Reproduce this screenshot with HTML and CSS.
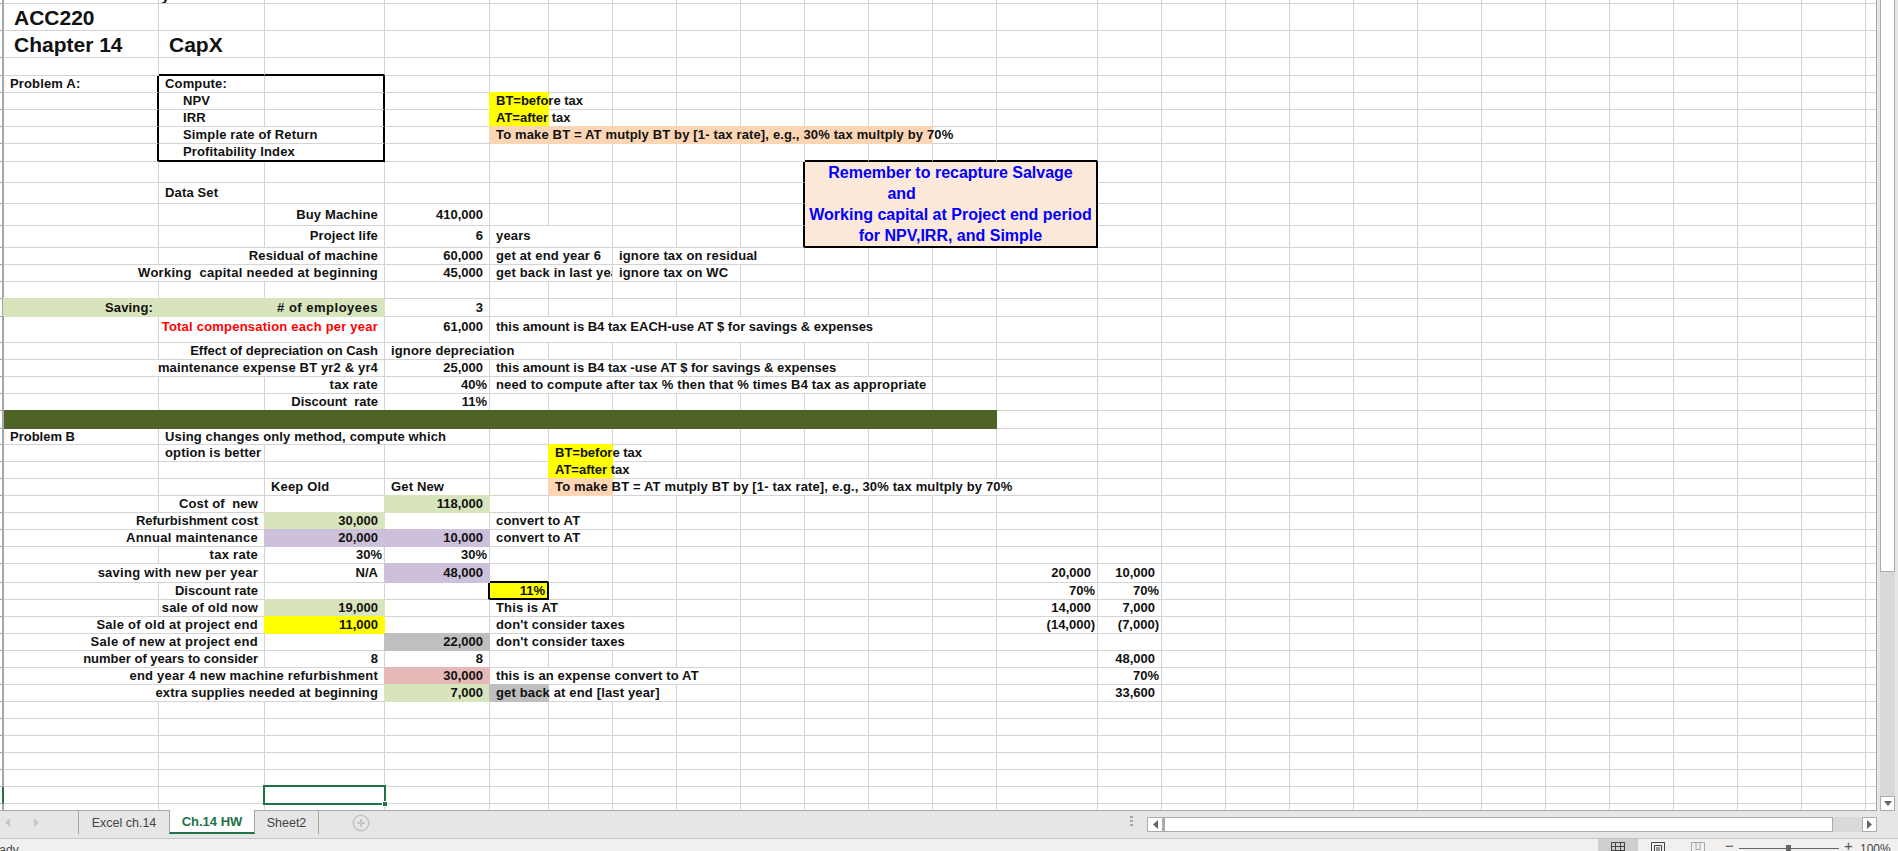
FILE: index.html
```html
<!DOCTYPE html>
<html lang="en">
<head>
<meta charset="utf-8">
<title>ACC220 Chapter 14 CapX</title>
<link rel="stylesheet" href="styles.css">
</head>
<body>
<div class="app">
<div class="work">
<div class="sheet">
<table class="grid">
<colgroup>
<col class="c-h"><col class="c-a"><col class="c-b"><col class="c-c"><col class="c-d"><col class="c-e"><col class="c-f">
<col class="c-n"><col class="c-n"><col class="c-n"><col class="c-n"><col class="c-n"><col class="c-n">
<col class="c-m"><col class="c-n"><col class="c-n"><col class="c-r">
</colgroup>
<tbody>
<tr class="h4"><td class="hd"></td><td class="kn"></td><td class="kn"><div class="cut"><div class="cut-t">y</div></div></td><td></td><td></td><td></td><td></td><td class="g" colspan="6"></td><td></td><td></td><td></td><td class="r"></td></tr>
<tr class="h27"><td class="hd"></td><td class="title">ACC220</td><td></td><td></td><td></td><td></td><td></td><td class="g" colspan="6"></td><td></td><td></td><td></td><td class="r"></td></tr>
<tr class="h27"><td class="hd"></td><td class="title">Chapter 14</td><td class="title t2">CapX</td><td></td><td></td><td></td><td></td><td class="g" colspan="6"></td><td></td><td></td><td></td><td class="r"></td></tr>
<tr class="h18"><td class="hd"></td><td></td><td class="kb"></td><td class="kb"></td><td></td><td></td><td></td><td class="g" colspan="6"></td><td></td><td></td><td></td><td class="r"></td></tr>
<tr><td class="hd"></td><td class="l kr">Problem A:</td><td class="l">Compute:</td><td class="kr"></td><td></td><td></td><td></td><td class="g" colspan="6"></td><td></td><td></td><td></td><td class="r"></td></tr>
<tr><td class="hd"></td><td class="kr"></td><td class="l in">NPV</td><td class="kr"></td><td></td><td class="l yl nr ls0">BT=before tax</td><td></td><td class="g" colspan="6"></td><td></td><td></td><td></td><td class="r"></td></tr>
<tr><td class="hd"></td><td class="kr"></td><td class="l in">IRR</td><td class="kr"></td><td></td><td class="l yl nr ls0">AT=after tax</td><td></td><td class="g" colspan="6"></td><td></td><td></td><td></td><td class="r"></td></tr>
<tr><td class="hd"></td><td class="kr"></td><td class="l in kr" colspan="2">Simple rate of Return</td><td></td><td class="l pe nr" colspan="7">To make BT = AT mutply BT by [1- tax rate], e.g., 30% tax multply by 70%</td><td></td><td></td><td></td><td></td><td class="r"></td></tr>
<tr class="h18"><td class="hd"></td><td class="kr"></td><td class="l in kb kr" colspan="2">Profitability Index</td><td></td><td></td><td></td><td></td><td></td><td></td><td class="kb"></td><td class="kb"></td><td class="kb"></td><td class="kb"></td><td></td><td></td><td class="r"></td></tr>
<tr class="h21"><td class="hd"></td><td></td><td></td><td></td><td></td><td></td><td></td><td></td><td></td><td class="kr"></td>
<td class="note" colspan="4" rowspan="4"><div class="note-l">Remember to recapture Salvage</div><div class="note-l">and&nbsp;&nbsp;&nbsp;&nbsp;&nbsp;&nbsp;&nbsp;&nbsp;&nbsp;&nbsp;&nbsp;&nbsp;&nbsp;&nbsp;&nbsp;&nbsp;&nbsp;&nbsp;&nbsp;&nbsp;&nbsp;&nbsp;</div><div class="note-l">Working capital at Project end period</div><div class="note-l">for NPV,IRR, and Simple</div></td>
<td></td><td></td><td class="r"></td></tr>
<tr class="h21"><td class="hd"></td><td></td><td class="l">Data Set</td><td></td><td></td><td></td><td></td><td></td><td></td><td class="kr"></td><td></td><td></td><td class="r"></td></tr>
<tr class="h21"><td class="hd"></td><td></td><td></td><td class="v">Buy Machine</td><td class="v n">410,000</td><td></td><td></td><td></td><td></td><td class="kr"></td><td></td><td></td><td class="r"></td></tr>
<tr class="h22"><td class="hd"></td><td></td><td></td><td class="v">Project life</td><td class="v n">6</td><td class="l nr">years</td><td></td><td></td><td></td><td class="kr"></td><td></td><td></td><td class="r"></td></tr>
<tr><td class="hd"></td><td></td><td class="v" colspan="2">Residual of machine</td><td class="v n">60,000</td><td class="l" colspan="2">get at end year 6</td><td class="l" colspan="3">ignore tax on residual</td><td class="g" colspan="3"></td><td></td><td></td><td></td><td class="r"></td></tr>
<tr><td class="hd"></td><td class="v ls3" colspan="3">Working&nbsp;&nbsp;capital needed at beginning</td><td class="v n">45,000</td><td class="l clip" colspan="2">get back in last year</td><td class="l" colspan="2">ignore tax on WC</td><td class="g" colspan="4"></td><td></td><td></td><td></td><td class="r"></td></tr>
<tr><td class="hd"></td><td></td><td></td><td></td><td></td><td></td><td></td><td class="g" colspan="6"></td><td></td><td></td><td></td><td class="r"></td></tr>
<tr class="h18"><td class="hd"></td><td class="v gr nr">Saving:</td><td class="v gr ls5" colspan="2"># of employees</td><td class="v n">3</td><td></td><td></td><td class="g" colspan="6"></td><td></td><td></td><td></td><td class="r"></td></tr>
<tr class="h26"><td class="hd"></td><td></td><td class="v red ls2" colspan="2">Total compensation each per year</td><td class="v n">61,000</td><td class="l ls0" colspan="7">this amount is B4 tax EACH-use AT $ for savings &amp; expenses</td><td class="g"></td><td></td><td></td><td></td><td class="r"></td></tr>
<tr><td class="hd"></td><td></td><td class="v ls0" colspan="2">Effect of depreciation on Cash</td><td class="l" colspan="2">ignore depreciation</td><td></td><td class="g" colspan="6"></td><td></td><td></td><td></td><td class="r"></td></tr>
<tr><td class="hd"></td><td class="v" colspan="3">maintenance expense BT yr2 &amp; yr4</td><td class="v n">25,000</td><td class="l ls0" colspan="6">this amount is B4 tax -use AT $ for savings &amp; expenses</td><td class="g" colspan="2"></td><td></td><td></td><td></td><td class="r"></td></tr>
<tr><td class="hd"></td><td></td><td></td><td class="v ls3">tax rate</td><td class="v n pc">40%</td><td class="l" colspan="7">need to compute after tax % then that % times B4 tax as appropriate</td><td class="g"></td><td></td><td></td><td></td><td class="r"></td></tr>
<tr><td class="hd"></td><td></td><td></td><td class="v ls0">Discount&nbsp;&nbsp;rate</td><td class="v n pc">11%</td><td></td><td></td><td class="g" colspan="6"></td><td></td><td></td><td></td><td class="r"></td></tr>
<tr class="h18"><td class="hd"></td><td class="bar" colspan="12"></td><td></td><td></td><td></td><td class="r"></td></tr>
<tr class="h16"><td class="hd"></td><td class="l ls0">Problem B</td><td class="l" colspan="3">Using changes only method, compute which</td><td></td><td></td><td class="g" colspan="6"></td><td></td><td></td><td></td><td class="r"></td></tr>
<tr><td class="hd"></td><td></td><td class="l">option is better</td><td></td><td></td><td></td><td class="l yl nr ls0">BT=before tax</td><td class="g" colspan="6"></td><td></td><td></td><td></td><td class="r"></td></tr>
<tr><td class="hd"></td><td></td><td></td><td></td><td></td><td></td><td class="l yl nr ls0">AT=after tax</td><td class="g" colspan="6"></td><td></td><td></td><td></td><td class="r"></td></tr>
<tr><td class="hd"></td><td></td><td></td><td class="l">Keep Old</td><td class="l">Get New</td><td></td><td class="l pe nr">To make BT = AT mutply BT by [1- tax rate], e.g., 30% tax multply by 70%</td><td class="nr" colspan="6"></td><td></td><td></td><td></td><td class="r"></td></tr>
<tr><td class="hd"></td><td></td><td class="v">Cost of&nbsp;&nbsp;new</td><td></td><td class="v n gr">118,000</td><td></td><td></td><td class="g" colspan="6"></td><td></td><td></td><td></td><td class="r"></td></tr>
<tr><td class="hd"></td><td class="v ls0" colspan="2">Refurbishment cost</td><td class="v n gr">30,000</td><td></td><td class="l" colspan="2">convert to AT</td><td class="g" colspan="6"></td><td></td><td></td><td></td><td class="r"></td></tr>
<tr><td class="hd"></td><td class="v ls3" colspan="2">Annual maintenance</td><td class="v n pu">20,000</td><td class="v n pu">10,000</td><td class="l" colspan="2">convert to AT</td><td class="g" colspan="6"></td><td></td><td></td><td></td><td class="r"></td></tr>
<tr><td class="hd"></td><td></td><td class="v ls3">tax rate</td><td class="v n pc">30%</td><td class="v n pc">30%</td><td></td><td></td><td class="g" colspan="6"></td><td></td><td></td><td></td><td class="r"></td></tr>
<tr class="h19"><td class="hd"></td><td class="v ls3" colspan="2">saving with new per year</td><td class="v n">N/A</td><td class="v n pu">48,000</td><td class="kb"></td><td></td><td class="g" colspan="6"></td><td class="v n">20,000</td><td class="v n">10,000</td><td></td><td class="r"></td></tr>
<tr><td class="hd"></td><td></td><td class="v ls0">Discount rate</td><td></td><td class="kr"></td><td class="v n pc yl kr kb">11%</td><td></td><td class="g" colspan="6"></td><td class="v n pc">70%</td><td class="v n pc">70%</td><td></td><td class="r"></td></tr>
<tr><td class="hd"></td><td></td><td class="v">sale of old now</td><td class="v n gr">19,000</td><td></td><td class="l" colspan="2">This is AT</td><td class="g" colspan="6"></td><td class="v n">14,000</td><td class="v n">7,000</td><td></td><td class="r"></td></tr>
<tr><td class="hd"></td><td class="v ls3" colspan="2">Sale of old at project end</td><td class="v n yl">11,000</td><td></td><td class="l" colspan="3">don't consider taxes</td><td class="g" colspan="5"></td><td class="v n pc">(14,000)</td><td class="v n pc">(7,000)</td><td></td><td class="r"></td></tr>
<tr><td class="hd"></td><td class="v ls3" colspan="2">Sale of new at project end</td><td></td><td class="v n gy">22,000</td><td class="l" colspan="3">don't consider taxes</td><td class="g" colspan="5"></td><td></td><td></td><td></td><td class="r"></td></tr>
<tr><td class="hd"></td><td class="v ls0" colspan="2">number of years to consider</td><td class="v n">8</td><td class="v n">8</td><td></td><td></td><td class="g" colspan="6"></td><td></td><td class="v n">48,000</td><td></td><td class="r"></td></tr>
<tr><td class="hd"></td><td class="v ls2" colspan="3">end year 4 new machine refurbishment</td><td class="v n pk">30,000</td><td class="l" colspan="4">this is an expense convert to AT</td><td class="g" colspan="4"></td><td></td><td class="v n pc">70%</td><td></td><td class="r"></td></tr>
<tr><td class="hd"></td><td class="v" colspan="3">extra supplies needed at beginning</td><td class="v n gr">7,000</td><td class="l gy nr">get back at end [last year]</td><td class="nr"></td><td></td><td class="g" colspan="5"></td><td></td><td class="v n">33,600</td><td></td><td class="r"></td></tr>
<tr><td class="hd"></td><td></td><td></td><td></td><td></td><td></td><td></td><td class="g" colspan="6"></td><td></td><td></td><td></td><td class="r"></td></tr>
<tr><td class="hd"></td><td></td><td></td><td></td><td></td><td></td><td></td><td class="g" colspan="6"></td><td></td><td></td><td></td><td class="r"></td></tr>
<tr><td class="hd"></td><td></td><td></td><td></td><td></td><td></td><td></td><td class="g" colspan="6"></td><td></td><td></td><td></td><td class="r"></td></tr>
<tr><td class="hd"></td><td></td><td></td><td></td><td></td><td></td><td></td><td class="g" colspan="6"></td><td></td><td></td><td></td><td class="r"></td></tr>
<tr><td class="hd"></td><td></td><td></td><td></td><td></td><td></td><td></td><td class="g" colspan="6"></td><td></td><td></td><td></td><td class="r"></td></tr>
<tr><td class="hd hd-sel"></td><td></td><td></td><td class="sel-cell"><div class="sel"><div class="sel-h"></div></div></td><td></td><td></td><td></td><td class="g" colspan="6"></td><td></td><td></td><td></td><td class="r"></td></tr>
<tr class="h8"><td class="hd"></td><td></td><td></td><td></td><td></td><td></td><td></td><td class="g" colspan="6"></td><td></td><td></td><td></td><td class="r"></td></tr>
</tbody>
</table>
</div>
<div class="vbar">
<div class="vthumb"></div>
<div class="vtrack"></div>
<div class="vbtn"><svg width="8" height="5" viewBox="0 0 8 5"><path d="M0 0h8L4 5z" fill="#666"/></svg></div>
</div>
</div>
<div class="tabbar">
<div class="tab-nav">
<svg width="5" height="9" viewBox="0 0 5 9"><path d="M5 0v9L0 4.500z" fill="#c6c6c6"/></svg>
<svg width="5" height="9" viewBox="0 0 5 9"><path d="M0 0v9l5-4.500z" fill="#c6c6c6"/></svg>
</div>
<div class="tab tab-first">Excel ch.14</div>
<div class="tab tab-on">Ch.14 HW</div>
<div class="tab tab-last">Sheet2</div>
<div class="tab-add"><svg width="18" height="18" viewBox="0 0 18 18"><circle cx="9" cy="9" r="7.800" fill="none" stroke="#c4c4c4" stroke-width="1.500"/><path d="M9 5v8M5 9h8" stroke="#c4c4c4" stroke-width="2"/></svg></div>
<div class="tab-gap"></div>
<div class="dots"><span></span><span></span><span></span></div>
<div class="hbar">
<div class="hbtn hbtn-l"><svg width="5" height="9" viewBox="0 0 5 9"><path d="M5 0v9L0 4.500z" fill="#666"/></svg></div>
<div class="hthumb"></div>
<div class="htrack"></div>
<div class="hbtn"><svg width="5" height="9" viewBox="0 0 5 9"><path d="M0 0v9l5-4.500z" fill="#666"/></svg></div>
</div>
</div>
<div class="status">
<div class="ready">Ready</div>
<div class="view view-on"><svg width="14" height="13" viewBox="0 0 14 13"><path d="M.500.500h13v12H.500zM.500 4.500h13M.500 8.500h13M4.500.500v12M9.500.500v12" fill="none" stroke="#444"/></svg></div>
<div class="view"><svg width="14" height="13" viewBox="0 0 14 13"><path d="M.500.500h13v12H.500zM3.500 3.500h7v9M3.500 3.500v9M5 6h4M5 8h4M5 10h4" fill="none" stroke="#444"/></svg></div>
<div class="view"><svg width="14" height="13" viewBox="0 0 14 13"><path d="M.500.500h13v12H.500zM5 .500v7h4V.500" fill="none" stroke="#a8a8a8"/></svg></div>
<div class="zoomer">
<span class="z-sign">&minus;</span>
<div class="slider"><div class="knob"></div></div>
<span class="z-sign">+</span>
<span class="z-val">100%</span>
</div>
</div>
</div>
</body>
</html>
```
FILE: styles.css
```css
* { box-sizing: border-box; }
html, body { margin: 0; padding: 0; height: 100%; overflow: hidden; background: #fff; }
body { font-family: "Liberation Sans", Arial, sans-serif; }
.app { width: 1898px; height: 851px; display: flex; flex-direction: column; overflow: hidden; }
.work { display: flex; height: 811px; flex: none; }
.sheet { width: 1877px; height: 811px; overflow: hidden; border-right: 1px solid #a6a6a6; border-bottom: 1px solid #a6a6a6; flex: none; }

.grid { table-layout: fixed; border-collapse: separate; border-spacing: 0; width: 1877px; }
.c-h { width: 4px; } .c-a { width: 155px; } .c-b { width: 106px; } .c-c { width: 120px; }
.c-d { width: 105px; } .c-e { width: 59px; } .c-f { width: 64px; } .c-n { width: 64px; }
.c-m { width: 101px; } .c-r { width: 652px; }

.grid tr { height: 17px; }
.grid tr.h4 { height: 4px; } .grid tr.h8 { height: 8px; } .grid tr.h16 { height: 16px; }
.grid tr.h18 { height: 18px; } .grid tr.h19 { height: 19px; } .grid tr.h21 { height: 21px; }
.grid tr.h22 { height: 22px; } .grid tr.h26 { height: 26px; } .grid tr.h27 { height: 27px; }

.grid td {
  padding: 0 0 1px;
  border-right: 1px solid #d4d4d4;
  border-bottom: 1px solid #d4d4d4;
  font-size: 13px;
  font-weight: 700;
  line-height: 15px;
  letter-spacing: .15px;
  color: #111;
  white-space: nowrap;
  vertical-align: bottom;
}
.grid tr.h16 td, .grid tr.h18 td, .grid tr.h19 td, .grid tr.h21 td, .grid tr.h22 td, .grid tr.h26 td { vertical-align: middle; }
.grid tr.h26 td { padding-bottom: 6px; }
.grid tr.h16 td { padding-bottom: 0; }
.grid tr.h4 td, .grid tr.h8 td { padding: 0; line-height: 1px; }

.grid td.hd { border-right: 2px solid #a6a6a6; border-bottom-color: #a6a6a6; padding: 0; }
.grid td.hd-sel { border-right-color: #217346; }
.grid td.g { border-right: 0; background: repeating-linear-gradient(90deg, transparent 0 63px, #d4d4d4 63px 64px); padding: 0; }
.grid td.r { border-right: 0; background: repeating-linear-gradient(90deg, transparent 0 63px, #d4d4d4 63px 64px); padding: 0; }
.grid td.nr { border-right: 0; }
.grid td.kn { vertical-align: top; }

.grid td.l { text-align: left; padding-left: 6px; }
.grid td.in { padding-left: 24px; }
.grid td.v { text-align: right; padding-right: 6px; }
.grid td.pc { padding-right: 2px; }
.grid td.clip { overflow: hidden; }
.grid td.n { letter-spacing: 0; }
.grid td.ls0 { letter-spacing: 0; }
.grid td.ls2 { letter-spacing: .22px; }
.grid td.ls3 { letter-spacing: .27px; }
.grid td.ls5 { letter-spacing: .5px; }

.grid td.title { font-size: 21px; line-height: 24px; padding: 0 0 0 10px; letter-spacing: 0; }

.grid td.kr { border-right: 2px solid #000; }
.grid td.kb { border-bottom: 2px solid #000; }

.grid td.yl { background: #ffff00; box-shadow: -1px -1px 0 #ffff00; border-bottom-color: transparent; }
.grid td.pe { background: #fcd5b4; box-shadow: -1px -1px 0 #fcd5b4; border-bottom-color: transparent; }
.grid td.gr { background: #d8e4bc; box-shadow: -1px -1px 0 #d8e4bc; border-right-color: transparent; border-bottom-color: transparent; }
.grid td.pu { background: #ccc0da; box-shadow: -1px -1px 0 #ccc0da; border-right-color: transparent; border-bottom-color: transparent; }
.grid td.gy { background: #bfbfbf; box-shadow: -1px -1px 0 #bfbfbf; border-right-color: transparent; border-bottom-color: transparent; }
.grid td.pk { background: #e6b8b7; box-shadow: -1px -1px 0 #e6b8b7; border-right-color: transparent; border-bottom-color: transparent; }
.grid td.yl.v { border-right-color: transparent; }
.grid td.yl.kr { border-right-color: #000; border-bottom-color: #000; box-shadow: none; padding-bottom: 0; }
.grid td.bar { background: #4f6228; box-shadow: 0 -1px 0 #4f6228; border-right: 0; border-bottom-color: transparent; }
.grid td.red { color: #ff0000; }

.grid td.note {
  background: #fde9d9;
  border-right: 2px solid #000;
  border-bottom: 2px solid #000;
  color: #0000ff;
  font-size: 16px;
  letter-spacing: 0;
  padding: 0;
  vertical-align: top;
  text-align: center;
}
.note-l { height: 21px; line-height: 21px; }

.cut { height: 3px; overflow: hidden; }
.cut-t { font-size: 16px; line-height: 0; margin: -4px 0 0 2px; }

.sel-cell { position: relative; }
.sel { position: absolute; left: -2px; right: -2px; top: -2px; bottom: -2px; border: 2px solid #217346; }
.sel-h { position: absolute; right: -4px; bottom: -4px; width: 6px; height: 6px; background: #217346; border: 1px solid #fff; }

.vbar { width: 21px; height: 811px; background: #e6e6e6; display: flex; flex-direction: column; padding: 0 3px 0 3px; flex: none; }
.vthumb { height: 572px; background: #fff; border: 1px solid #ababab; border-top: 0; flex: none; }
.vtrack { flex: 1; background: #d9d9d9; }
.vbtn { height: 15px; background: #fff; border: 1px solid #ababab; display: flex; align-items: center; justify-content: center; flex: none; }

.tabbar { height: 27px; flex: none; background: #e6e6e6; display: flex; align-items: flex-start; color: #444; font-size: 12px; position: relative; }
.tab-nav { width: 78px; height: 23px; flex: none; display: flex; align-items: center; gap: 24px; padding-left: 5px; }
.tab { height: 23px; flex: none; display: flex; align-items: center; justify-content: center; font-size: 12.500px; }
.tab-first { width: 91px; border-left: 1px solid #a6a6a6; margin-top: 0; }
.tab-on { width: 86px; background: #fff; color: #217346; font-weight: 700; border-bottom: 2px solid #217346; border-left: 1px solid #a6a6a6; border-right: 1px solid #a6a6a6; margin-top: -1px; height: 24px; font-size: 13px; }
.tab-last { width: 64px; border-right: 1px solid #a6a6a6; }
.tab-add { width: 84px; height: 23px; display: flex; align-items: center; justify-content: center; flex: none; }
.tab-gap { flex: 1; }
.dots { width: 17px; height: 23px; display: flex; flex-direction: column; gap: 2px; padding-top: 5px; flex: none; }
.dots span { width: 3px; height: 2px; background: #a6a6a6; }
.hbar { width: 730px; height: 15px; margin-top: 6px; display: flex; flex: none; margin-right: 21px; }
.hbtn { width: 15px; height: 15px; background: #fff; border: 1px solid #ababab; display: flex; align-items: center; justify-content: center; flex: none; }
.hbtn-l { border-right: 0; }
.hthumb { width: 671px; background: #fff; border: 1px solid #ababab; border-left-width: 3px; flex: none; }
.htrack { flex: 1; background: #d9d9d9; }

.status { height: 13px; flex: none; background: #f1f0ef; border-top: 1px solid #c4c4c4; display: flex; align-items: flex-start; overflow: hidden; position: relative; font-size: 12px; color: #444; }
.ready { margin-left: -16px; padding-top: 4px; line-height: 14px; flex: none; width: 1614px; }
.view { width: 40px; height: 13px; display: flex; justify-content: center; padding-top: 3px; flex: none; }
.view-on { background: #d0cfcd; }
.zoomer { display: flex; align-items: flex-start; margin-left: 7px; flex: none; }
.z-sign { width: 9px; font-size: 15px; line-height: 13px; text-align: center; flex: none; color: #555; }
.slider { width: 100px; height: 1px; margin: 9px 5px 0 5px; background: #666; position: relative; flex: none; }
.knob { position: absolute; left: 47px; top: -3px; width: 5px; height: 9px; background: #666; }
.z-val { margin-left: 7px; line-height: 14px; padding-top: 3px; font-size: 12px; }
```
